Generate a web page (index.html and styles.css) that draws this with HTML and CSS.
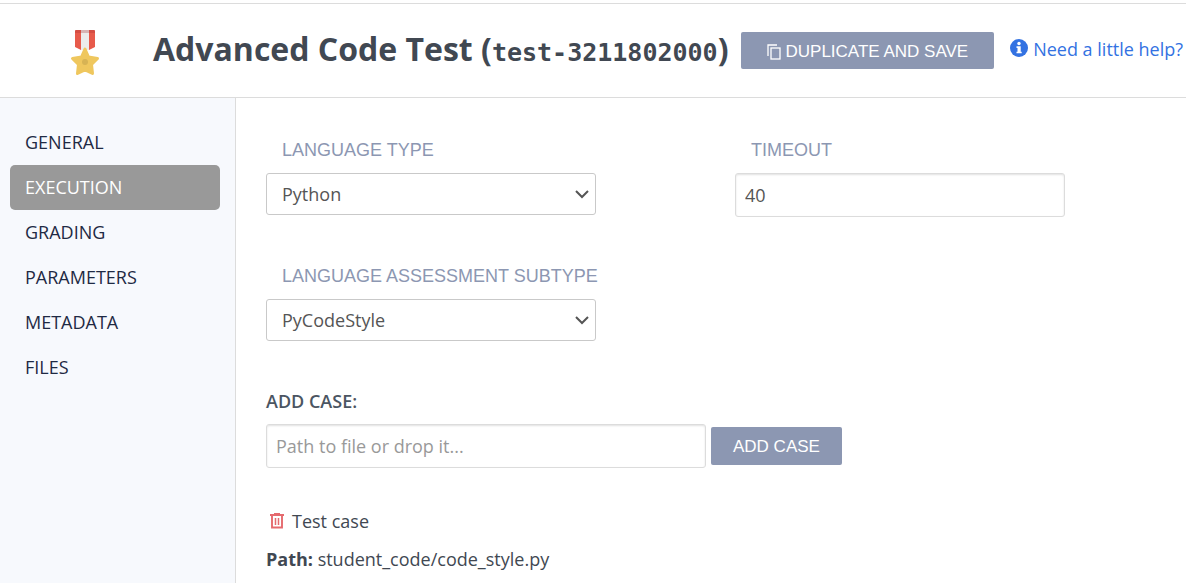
FILE: index.html
```html
<!DOCTYPE html>
<html lang="en">
<head>
<meta charset="utf-8">
<meta name="viewport" content="width=device-width, initial-scale=1">
<title>Advanced Code Test</title>
<link rel="stylesheet" href="styles.css">
</head>
<body>
<header class="header">
  <svg class="medal" viewBox="0 0 30 46" aria-hidden="true">
    <path fill="#e75a4b" d="M5 1Q5 0 6 0H24Q25 0 25 1V17L19 20H11L5 17Z"/>
    <path fill="#ececec" d="M11 0H19V20H11Z"/>
    <path fill="#a33" fill-opacity=".3" d="M5 1Q5 0 6 0H24Q25 0 25 1V3H5Z"/>
    <path fill="#efc75e" stroke="#efc75e" stroke-width="3" stroke-linejoin="round" d="M15 19L18.500 27L27.500 28.500L21.500 34.500L22.500 43.500L15 40L7.500 43.500L8.500 34.500L2.500 28.500L11.500 27Z"/>
    <circle cx="15" cy="32" r="3" fill="#d7b354"/>
  </svg>
  <h1 class="title">Advanced Code Test (<code class="test-id">test-3211802000</code>)</h1>
  <button class="button duplicate" type="button">
    <svg class="copy-icon" viewBox="0 0 14 16" fill="none" stroke="currentColor" aria-hidden="true"><path stroke-width="1.300" d="M1 12V1H10"/><rect x="4" y="4" width="9" height="11" stroke-width="1.300"/></svg>
    DUPLICATE AND SAVE
  </button>
  <a class="help" href="#help">
    <svg class="info-icon" viewBox="0 0 18 18" aria-hidden="true"><circle cx="9" cy="9" r="9" fill="#3372e2"/><circle cx="9" cy="4.500" r="1.700" fill="#fff"/><path fill="#fff" d="M6.500 7.300H10.700V12.700H11.700V14.300H6.500V12.700H7.500V8.900H6.500Z"/></svg>
    Need a little help?
  </a>
</header>
<div class="layout">
  <nav class="sidebar">
    <a class="nav-link" href="#general">GENERAL</a>
    <a class="nav-link active" href="#execution" aria-current="page">EXECUTION</a>
    <a class="nav-link" href="#grading">GRADING</a>
    <a class="nav-link" href="#parameters">PARAMETERS</a>
    <a class="nav-link" href="#metadata">METADATA</a>
    <a class="nav-link" href="#files">FILES</a>
  </nav>
  <main class="content">
    <div class="fields">
      <div class="field">
        <label class="field-label" for="language">LANGUAGE TYPE</label>
        <select class="control select" id="language"><option>Python</option></select>
      </div>
      <div class="field">
        <label class="field-label" for="timeout">TIMEOUT</label>
        <input class="control input" id="timeout" type="text" value="40">
      </div>
      <div class="field">
        <label class="field-label" for="subtype">LANGUAGE ASSESSMENT SUBTYPE</label>
        <select class="control select" id="subtype"><option>PyCodeStyle</option></select>
      </div>
    </div>
    <form class="add-case">
      <label class="add-label" for="path">ADD CASE:</label>
      <div class="add-row">
        <input class="control input path" id="path" type="text" placeholder="Path to file or drop it...">
        <button class="button" type="button">ADD CASE</button>
      </div>
    </form>
    <section class="case">
      <div class="case-name">
        <button class="delete" type="button" aria-label="Delete test case">
          <svg class="trash-icon" viewBox="0 0 14 16" fill="none" stroke="currentColor" aria-hidden="true"><path stroke-width="1.900" d="M0 2H14M4 1H10M2 2V14.500H12V2"/><path stroke-width="1.500" d="M5.500 5V12M8.500 5V12"/></svg>
        </button>
        Test case
      </div>
      <div class="case-path"><strong>Path:</strong> student_code/code_style.py</div>
    </section>
  </main>
</div>
</body>
</html>
```
FILE: styles.css
```css
* { box-sizing: border-box; }
body {
  margin: 0;
  padding-top: 3px;
  min-height: 100vh;
  display: flex;
  flex-direction: column;
  background: #fff;
  color: #414852;
  font: 18px/24px "Open Sans", sans-serif;
}
.header {
  display: flex;
  align-items: center;
  height: 95px;
  padding-left: 70px;
  border-top: 1px solid #dcdcdc;
  border-bottom: 1px solid #dcdcdc;
  white-space: nowrap;
}
.medal { width: 30px; height: 46px; margin: 4px 53px 0 0; flex: none; }
.title { margin: 0 12px 0 0; padding-bottom: 3px; font-size: 32px; line-height: 44px; font-weight: 700; }
.test-id { font: 700 25px/32px "DejaVu Sans Mono", monospace; }
.button {
  display: flex;
  align-items: center;
  justify-content: center;
  height: 38px;
  padding: 2px 22px 0;
  border: 0;
  border-radius: 2px;
  background: #8c97b2;
  color: #fff;
  font: 17px/20px "Liberation Sans", sans-serif;
}
.duplicate { gap: 5px; height: 37px; padding: 2px 26px 0; }
.copy-icon { width: 14px; height: 16px; }
.help {
  display: flex;
  align-items: center;
  gap: 5px;
  margin-left: 16px;
  padding-bottom: 4px;
  color: #3372e2;
  text-decoration: none;
}
.info-icon { width: 18px; height: 18px; margin-bottom: 2px; }
.layout { display: flex; flex: 1; }
.sidebar {
  flex: none;
  width: 236px;
  padding: 22px 15px 22px 10px;
  background: #f7f9fd;
  border-right: 1px solid #dcdcdc;
}
.nav-link {
  display: block;
  height: 45px;
  padding: 0 15px;
  border-radius: 5px;
  color: #1f2a44;
  line-height: 44px;
  text-decoration: none;
}
.nav-link.active { background: #999; color: #fff; }
.content { flex: 1; padding: 39px 0 0 30px; }
.fields {
  display: grid;
  grid-template-columns: 1fr 1fr;
  gap: 46px 18px;
}
.field { max-width: 330px; }
.field-label {
  display: block;
  padding-left: 16px;
  margin-bottom: 9px;
  color: #8c97b2;
  font: 18px/27px "Liberation Sans", sans-serif;
  white-space: nowrap;
}
.control {
  display: block;
  width: 100%;
  background-color: #fff;
  color: #555;
  font: 18px/24px "Open Sans", sans-serif;
}
.select {
  appearance: none;
  height: 42px;
  padding: 0 36px 0 15px;
  border: 1px solid #c9c9c9;
  border-radius: 3px;
  background-image: url("data:image/svg+xml,%3Csvg xmlns='http://www.w3.org/2000/svg' viewBox='0 0 14 10'%3E%3Cpath d='M1 2L7 8L13 2' fill='none' stroke='%23555' stroke-width='2'/%3E%3C/svg%3E");
  background-repeat: no-repeat;
  background-position: right 6px center;
  background-size: 14px 10px;
}
.input {
  height: 44px;
  padding: 0 9px;
  border: 1px solid #dcdcdc;
  border-radius: 3px;
  box-shadow: inset 0 1px 2px rgba(0, 0, 0, .12);
}
.input::placeholder { color: #999; opacity: 1; }
.add-case { margin-top: 48px; }
.add-label { display: block; margin-bottom: 11px; font-weight: 600; color: #4b5562; }
.add-row { display: flex; align-items: center; gap: 5px; }
.path { width: 440px; }
.case { margin-top: 40px; }
.case-name { display: flex; align-items: center; gap: 8px; padding-left: 4px; margin-bottom: 13px; line-height: 26px; }
.delete { display: flex; padding: 0; border: 0; background: none; color: #e56a6e; }
.trash-icon { width: 14px; height: 16px; }
```
